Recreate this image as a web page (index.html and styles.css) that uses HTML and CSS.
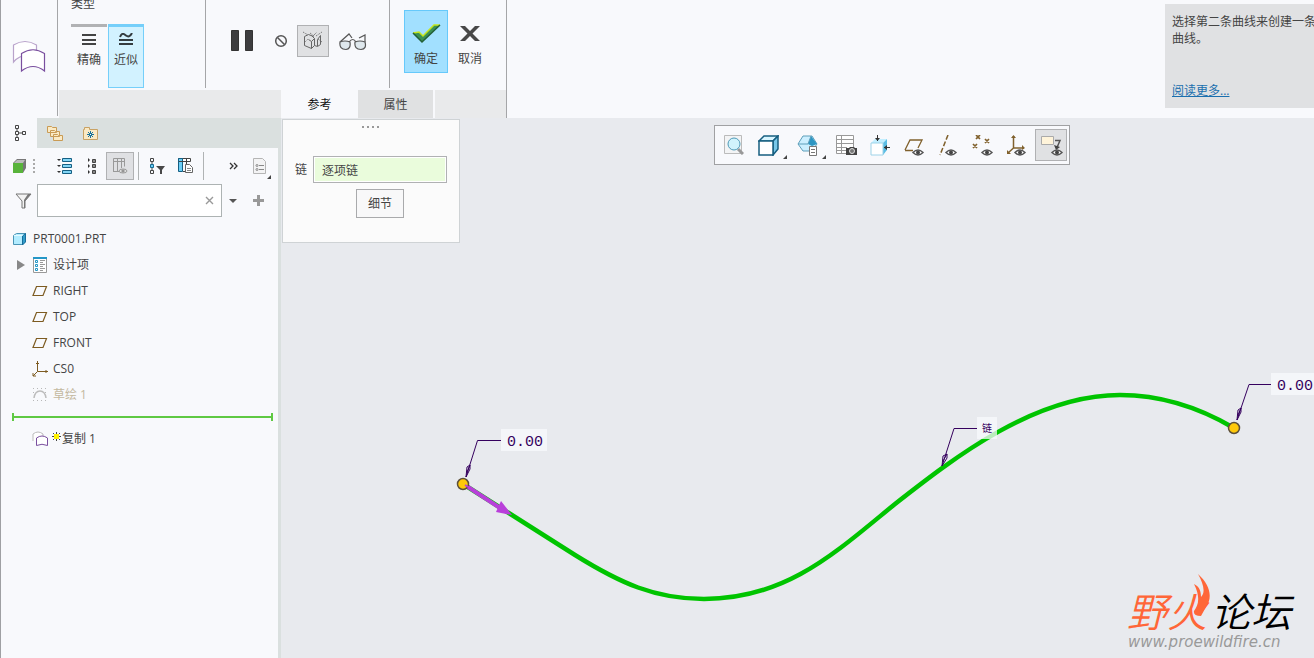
FILE: index.html
```html
<!DOCTYPE html>
<html lang="zh-CN">
<head>
<meta charset="utf-8">
<title>PRT0001</title>
<link rel="stylesheet" href="styles.css">
</head>
<body>
<header class="ribbon">
  <div class="feature">
    <svg width="34" height="34" viewBox="0 0 34 34" fill="#fff" stroke-width="1.200"><path d="M1.500 22V5Q13-2 24.500 5V17Q10 12 1.500 22Z" stroke="#b9a3cb"/><path d="M9.500 31V13.500Q21 6 32.500 13.500V31Q21 22 9.500 31Z" stroke="#7a4f9f"/></svg>
  </div>
  <div class="dashboard">
    <div class="groups">
      <section class="group group-type">
        <h2 class="group-title">类型</h2>
        <div class="choices">
          <button class="choice"><svg width="14" height="14" viewBox="0 0 14 14" stroke="#444" stroke-width="2"><path d="M0 2H14M0 7H14M0 11H14"/></svg><span>精确</span></button>
          <button class="choice choice-on"><svg width="14" height="14" viewBox="0 0 14 14" stroke="#333c40" stroke-width="2" fill="none"><path d="M1 4C3-1 5 1 7 2.500S11 4 13 0M0 7H14M0 11H14"/></svg><span>近似</span></button>
        </div>
      </section>
      <section class="group group-preview">
        <button class="icon-button" aria-label="暂停"><svg width="24" height="24" viewBox="0 0 24 24"><path d="M1.500 1.500h7v20h-7zM15.500 1.500h7v20h-7z" fill="#3d3d3f" stroke="#333"/></svg></button>
        <button class="icon-button" aria-label="无预览"><svg width="14" height="14" viewBox="0 0 14 14" fill="none" stroke="#555" stroke-width="1.500"><circle cx="7" cy="7" r="5.300"/><path d="M3.500 3.500l7 7"/></svg></button>
        <button class="icon-button icon-button-on" aria-label="分离"><svg width="22" height="20" viewBox="0 0 22 20" fill="none" stroke="#666"><path d="M2.500 5.500v9l7 3v-7l-3-2M9.500 10.500l3-3v7l-3 3M12.500 14.500l3 1 3-2V4.500M2.500 5.500l4-2 5 2M15.500 15V8.500l3-4M12.500 7.500l-3-3"/><path d="M1 1l5 3M14 5l6-4M8 2l4 3M12 4l3-3M16 8l4 3M2 12l4-4" stroke-dasharray="1 1"/></svg></button>
        <button class="icon-button" aria-label="特征预览"><svg width="28" height="20" viewBox="0 0 28 20" fill="none" stroke="#555" stroke-width="1.200"><path d="M1 11L10 3l3 4M20 7l6-3v7"/><path d="M1 11q5-2 10 0 1 7-4 7.500-7 0-6-7.500zM16 11q5-2 10 0 2 7-4 7.500-7 0-6-7.500z" fill="#dfe8ed"/><path d="M10 11q4-5 7 0"/></svg></button>
      </section>
      <section class="group group-finish">
        <button class="finish finish-ok"><svg width="30" height="22" viewBox="0 0 30 22"><path d="M2 11l6-1 4 4L23 3h6L11 20z" fill="#3a9154"/><path d="M2 11l6-1 4 4L23 3h6" fill="none" stroke="#c5e51c" stroke-width="1.500"/><path d="M29 3L11 20 2 11" fill="none" stroke="#225f38" stroke-width="1.500"/></svg><span>确定</span></button>
        <button class="finish"><svg width="20" height="22" viewBox="0 0 20 22" fill="#484848"><path d="M0 4h5l5 5 5-5h5l-7.500 7.500L20 19h-5l-5-5-5 5H0l7.500-7.500z"/></svg><span>取消</span></button>
      </section>
    </div>
    <nav class="tabs">
      <button class="tab tab-on">参考</button>
      <button class="tab">属性</button>
    </nav>
  </div>
  <aside class="help">
    <p class="help-text">选择第二条曲线来创建一条复合<br>曲线。</p>
    <a class="help-link" href="#more">阅读更多...</a>
  </aside>
</header>

<main class="workspace">
  <aside class="sidebar">
    <nav class="nav-tabs">
      <button class="nav-tab nav-tab-on" aria-label="模型树"><svg width="12" height="16" viewBox="0 0 12 16" fill="none" stroke="#444"><path d="M.5.500h3v3h-3zM.5 6.500h3v3h-3zM.5 12.500h3v3h-3zM7.500 6.500h3v3h-3zM2 4v2M2 10v2M4 8h3"/></svg></button>
      <button class="nav-tab" aria-label="文件夹浏览器"><svg width="17" height="17" viewBox="0 0 17 17" fill="#fbeac4" stroke="#c99b55"><path d="M.5 1.500h4l1 1h4v5h-9zM3.500 5.500h4l1 1h4v5h-9zM6.500 9.500h4l1 1h4v5h-9z"/></svg></button>
      <button class="nav-tab" aria-label="收藏夹"><svg width="16" height="15" viewBox="0 0 16 15"><path d="M.5 3.500h1v-2h5v2h8v10h-14z" fill="#fae9c4" stroke="#c9a264"/><path d="M7.500 5v7M4 8.500h7M5 6l5 5M10 6l-5 5" stroke="#17719b"/><path d="M7 8h1v1H7z" fill="#fff"/></svg></button>
    </nav>
    <div class="tree-tools">
      <button class="tool" aria-label="模型"><svg width="14" height="14" viewBox="0 0 14 14"><path d="M0 4l4-4h9v9l-3 5V4z" fill="#777"/><path d="M1 4l3-3h8l-2 3z" fill="#bbb"/><path d="M0 4h10v10H0z" fill="#58b33b"/></svg></button>
      <svg width="2" height="16" viewBox="0 0 2 16" fill="#aaa"><path d="M0 1h2v2H0zM0 5h2v2H0zM0 9h2v2H0zM0 13h2v2H0z"/></svg>
      <span></span>
      <button class="tool" aria-label="全部展开"><svg width="16" height="16" viewBox="0 0 16 16"><path d="M6.500.500h9v3h-9zM6.500 6.500h9v3h-9zM6.500 12.500h9v3h-9z" fill="#82d5f5" stroke="#155f83"/><path d="M1 1h4L3 3zM1 7h4L3 9zM1 13h4l-2 2z" fill="#333"/></svg></button>
      <button class="tool" aria-label="全部折叠"><svg width="9" height="16" viewBox="0 0 9 16"><path d="M4.500 1.500h3v3h-3zM4.500 6.500h3v3h-3zM4.500 12.500h3v3h-3z" fill="#888" stroke="#444"/><path d="M0 0l2 2-2 2zM0 6l2 2-2 2zM0 12l2 2-2 2z" fill="#333"/></svg></button>
      <button class="tool tool-on" aria-label="显示列"><svg width="16" height="16" viewBox="0 0 16 16" fill="none" stroke="#999"><path d="M1.500 13.500V.500h11v8M1 3.500h12M5.500 1v13M9.500 1v9M1 13.500h6"/><ellipse cx="11" cy="13" rx="4" ry="2" fill="#ddd"/><path d="M10 12h2v2h-2z" fill="#888"/></svg></button>
      <span class="rule"></span>
      <button class="tool" aria-label="树过滤器"><svg width="16" height="16" viewBox="0 0 16 16"><path d="M1.500.500h3v3h-3zM1.500 12.500h3v3h-3zM3 4v2M3 10v2" fill="none" stroke="#444"/><path d="M1.500 6.500h3v3h-3z" fill="#6bcef5" stroke="#176a92"/><path d="M7 8h9l-3 4v4h-2v-4z" fill="#484848"/></svg></button>
      <button class="tool" aria-label="树列"><svg width="16" height="16" viewBox="0 0 16 16"><path d="M.5.500h12v3H.5z" fill="#fff" stroke="#444"/><path d="M.5.500h4v13h-4z" fill="#6bcef5" stroke="#155f83"/><path d="M8.500 1v6M5 13.500h2M1 3.500h11" stroke="#444"/><path d="M7.500 6.500h4l3 3v5h-7z" fill="#fff" stroke="#666"/><path d="M9 10.500h4M9 12.500h4" stroke="#888"/></svg></button>
      <span class="rule"></span>
      <span></span>
      <button class="tool" aria-label="更多"><svg width="9" height="9" viewBox="0 0 9 9" fill="none" stroke="#333" stroke-width="1.300"><path d="M1 1l3 3-3 3M5 1l3 3-3 3"/></svg></button>
      <button class="tool menu" aria-label="设置"><svg width="14" height="17" viewBox="0 0 14 17"><path d="M.5.500h9l3 3v12H.5z" fill="#f3f3f4" stroke="#b5b5b5"/><path d="M6 7.500h5M6 11.500h5" stroke="#888"/><circle cx="4" cy="7.500" r="1" fill="none" stroke="#888"/><circle cx="4" cy="11.500" r="1" fill="none" stroke="#888"/></svg></button>
    </div>
    <div class="search">
      <svg width="17" height="16" viewBox="0 0 17 16"><path d="M1 1h15l-6 7v7H7V8z" fill="#f3f3f3" stroke="#777"/><path d="M16 1l-6 7v7H9V7l4-6z" fill="#777"/></svg>
      <div class="search-box"><input class="search-input" type="text" aria-label="搜索"><button class="tool search-clear" aria-label="清除"><svg width="9" height="9" viewBox="0 0 9 9" stroke="#999" stroke-width="1.400"><path d="M1 1l7 7M8 1L1 8"/></svg></button></div>
      <button class="tool" aria-label="搜索选项"><svg width="8" height="4" viewBox="0 0 8 4"><path d="M0 0h8L4 4z" fill="#555"/></svg></button>
      <button class="tool" aria-label="添加"><svg width="11" height="11" viewBox="0 0 11 11" stroke="#999" stroke-width="3"><path d="M5.500 0v11M0 5.500h11"/></svg></button>
    </div>
    <ul class="tree">
      <li class="node node-root"><svg width="14" height="14" viewBox="0 0 14 14" stroke="#4a94b5"><path d="M.5 3.500l3-2h9v8l-3 3H.5z" fill="#b2ecff"/><path d="M9.500 4v9l3-3V1.500z" fill="#319cc9" stroke="#176d9b"/><path d="M1 3.500h8.500" stroke="#e4faff"/></svg><span>PRT0001.PRT</span></li>
      <li class="node node-open"><svg width="8" height="10" viewBox="0 0 8 10"><path d="M0 0l8 5-8 5z" fill="#888"/></svg><svg width="16" height="16" viewBox="0 0 16 16"><path d="M1.500.500h13v15h-13z" fill="#fff" stroke="#999"/><path d="M1 1h14" stroke="#2497c7" stroke-width="2"/><path d="M3.500 3.500h2v2h-2zM3.500 7.500h2v2h-2zM3.500 11.500h2v2h-2z" fill="#fff" stroke="#2497c7"/><path d="M8 3.500h5M8 5.500h3M8 7.500h5M8 9.500h3M8 11.500h5M8 13.500h3" stroke="#999"/></svg><span>设计项</span></li>
      <li class="node"><svg width="16" height="16" viewBox="0 0 16 16"><path d="M1 12.500L4.500 3.500H14.500L11 12.500Z" fill="none" stroke="#7d5b21" stroke-width="1.200"/></svg><span>RIGHT</span></li>
      <li class="node"><svg width="16" height="16" viewBox="0 0 16 16"><path d="M1 12.500L4.500 3.500H14.500L11 12.500Z" fill="none" stroke="#7d5b21" stroke-width="1.200"/></svg><span>TOP</span></li>
      <li class="node"><svg width="16" height="16" viewBox="0 0 16 16"><path d="M1 12.500L4.500 3.500H14.500L11 12.500Z" fill="none" stroke="#7d5b21" stroke-width="1.200"/></svg><span>FRONT</span></li>
      <li class="node"><svg width="16" height="16" viewBox="0 0 16 16"><path d="M5.500 0v10.500H16M5.500 10.500L1 15M4 2.500h3M14 9v3M1 12v3h3" fill="none" stroke="#7d5b21"/></svg><span>CS0</span></li>
      <li class="node node-dim"><svg width="16" height="16" viewBox="0 0 16 16" fill="none"><path d="M1 1.500h14M1 13.500h14M1 5.500h2M13 5.500h2" stroke="#b8b8b8" stroke-dasharray="1 3"/><path d="M2 11Q3 4 8 4t6 7" stroke="#bcbcbc" stroke-width="1.500"/></svg><span>草绘 1</span></li>
    </ul>
    <div class="insert-mark"></div>
    <ul class="tree">
      <li class="node node-new"><svg width="17" height="16" viewBox="0 0 17 16"><path d="M1 10V3Q6-1 11 3v5" fill="#fff" stroke="#bbb"/><path d="M4.500 14.500V7Q10 3 15.500 7v7.500Q10 12 4.500 14.500Z" fill="#fff" stroke="#7a4f9f"/></svg><svg width="9" height="16" viewBox="0 0 9 16"><path d="M4.500 1v9M0 5.500h9M1 2l7 7M8 2L1 9" stroke="#444"/><path d="M2 3h5v5H2z" fill="#fff200"/></svg><span>复制 1</span></li>
    </ul>
  </aside>

  <section class="canvas">
    <svg class="drawing" width="1033" height="540" viewBox="281 118 1033 540">
      <path d="M463 484L575 555C620 583 655 599 704 599C787 599 836 552 895 504C955 457 1035 395 1120 395C1160 395 1200 408 1234 428" fill="none" stroke="#00c400" stroke-width="4.500"/>
      <path d="M465 485L500 508" stroke="#b93fda" stroke-width="4"/>
      <path d="M501 501L512 515L496 512Z" fill="#b93fda"/>
      <g fill="#ffc90a" stroke="#5d5039" stroke-width="1.500"><circle cx="463" cy="484" r="5.500"/><circle cx="1234" cy="428" r="5.500"/></g>
      <path d="M465 485l8 5" stroke="#b93fda" stroke-width="2"/>
      <g fill="none" stroke="#35005e"><path d="M466 477L477.500 440.500H501M1237 420L1249 384.500H1271M942 466L954 428.500H977"/><path d="M466 477l1-10 3-2 0 4zM1237 420l1-10 3-2 0 4zM942 466l1-10 4-2 0 4zM467 472l3-7M1238 415l3-7M943 461l4-7"/></g>
      <g class="note-box"><path d="M501 429h46v22h-46zM1271 373h46v22h-46zM977 417h20v22h-20z"/></g>
      <text class="note" x="507" y="446">0.00</text>
      <text class="note" x="1277" y="390">0.00</text>
      <text class="note note-small" x="982" y="432">链</text>
    </svg>

    <form class="panel">
      <svg class="panel-grip" width="18" height="2" viewBox="0 0 18 2" fill="#999"><path d="M0 0h2v2H0zM5 0h2v2H5zM10 0h2v2h-2zM15 0h2v2h-2z"/></svg>
      <div class="panel-row"><label for="chain">链</label><input id="chain" class="chain" type="text" value="逐项链"></div>
      <button class="details" type="button">细节</button>
    </form>

    <div class="view-area">
      <div class="view-tools">
        <button class="view" aria-label="重新调整"><svg width="20" height="20" viewBox="0 0 20 20"><path d="M.5.500h17v18H.5z" fill="#f3f4f5" stroke="#bbb"/><path d="M14 14l5 5" stroke="#999" stroke-width="3"/><circle cx="10" cy="9" r="6" fill="#d1f3fc" stroke="#4f9ab8"/></svg></button>
        <button class="view menu view-menu" aria-label="显示样式"><svg width="21" height="21" viewBox="0 0 21 21" stroke="#175f80" stroke-width="1.500"><path d="M1 6l5-5h14l-5 5z" fill="#d7f5ff"/><path d="M15 6l5-5v13l-5 6z" fill="#78c8e9"/><path d="M1 6h14v14H1z" fill="#fff"/></svg></button>
        <button class="view menu view-menu" aria-label="已保存方向"><svg width="21" height="21" viewBox="0 0 21 21"><path d="M1 9l5-8h9l5 8-5 7H6z" fill="#ccefff" stroke="#5e9fba"/><path d="M14 1l6 8-5 2-4-2z" fill="#2d96c3"/><path d="M1 9h10M11 9l3-8" stroke="#5e9fba"/><path d="M12.500 11.500h7v9h-7z" fill="#fff" stroke="#777"/><path d="M14 14.500h4M14 17.500h4" stroke="#777"/></svg></button>
        <button class="view" aria-label="视图管理器"><svg width="21" height="21" viewBox="0 0 21 21"><path d="M.5.500h17v18H.5zM1 4.500h16M1 8.500h16M1 12.500h10M1 15.500h9M5.500 1v17" fill="#fff" stroke="#999"/><path d="M10 13h3l1-1h4l1 1h2v7H10z" fill="#444"/><circle cx="16" cy="16" r="2.500" fill="#777" stroke="#ddd"/></svg></button>
        <button class="view" aria-label="截面"><svg width="20" height="21" viewBox="0 0 20 21"><path d="M1 8l4-4h12l-4 4z" fill="#c3efff"/><path d="M13 8l4-4v11l-4 5z" fill="#5bbde4"/><path d="M1 8h12v12H1z" fill="#fff" stroke="#9ed3e8"/><path d="M7.500 0v6M14 12.500h6" stroke="#333"/><path d="M5 3h5L7.500 6zM17 10v5l-3-2.500z" fill="#333"/></svg></button>
        <button class="view" aria-label="平面显示"><svg width="20" height="21" viewBox="0 0 20 21"><path d="M1 15L6 5h12l-4 8M1 15.500h8" fill="none" stroke="#80612d" stroke-width="1.300"/><path d="M9 17.500q5-5 10 0-5 5-10 0z" fill="#fff" stroke="#555" stroke-width="1.500"/><circle cx="14" cy="17.500" r="2" fill="#444"/></svg></button>
        <button class="view" aria-label="轴显示"><svg width="20" height="21" viewBox="0 0 20 21"><path d="M10 0L2 20" fill="none" stroke="#80612d" stroke-width="1.500" stroke-dasharray="5 2"/><path d="M8 17.500q5-5 10 0-5 5-10 0z" fill="#fff" stroke="#555" stroke-width="1.500"/><circle cx="13" cy="17.500" r="2" fill="#444"/></svg></button>
        <button class="view" aria-label="点显示"><svg width="21" height="21" viewBox="0 0 21 21"><path d="M4 0l4 4M8 0L4 4M13 4l4 4M17 4l-4 4M1 9l4 4M5 9l-4 4" fill="none" stroke="#80612d" stroke-width="1.700"/><path d="M10 17.500q5-5 10 0-5 5-10 0z" fill="#fff" stroke="#555" stroke-width="1.500"/><circle cx="15" cy="17.500" r="2" fill="#444"/></svg></button>
        <button class="view" aria-label="坐标系显示"><svg width="20" height="21" viewBox="0 0 20 21"><path d="M7.500 1v12H18M7.500 13L2 18" fill="none" stroke="#80612d" stroke-width="1.500"/><path d="M5 3l2.500-3L10 3zM16 10v5l3-2zM1 15v4h4z" fill="#80612d"/><path d="M9 17.500q5-5 10 0-5 5-10 0z" fill="#fff" stroke="#555" stroke-width="1.500"/><circle cx="14" cy="17.500" r="2" fill="#444"/></svg></button>
        <button class="view view-on" aria-label="注释显示"><svg width="23" height="21" viewBox="0 0 23 21"><path d="M1.500 1.500h12v8h-12z" fill="#fff4da" stroke="#aaa"/><path d="M15 5.500h5l-3 7" fill="none" stroke="#555" stroke-width="1.500"/><path d="M14 10l6 2-4 3z" fill="#444"/><path d="M12 17.500q5-5 10 0-5 5-10 0z" fill="#fff" stroke="#555" stroke-width="1.500"/><circle cx="17" cy="17.500" r="2" fill="#444"/></svg></button>
      </div>
    </div>

    <div class="brand">
      <svg class="brand-flame" width="18" height="44" viewBox="0 0 18 44"><path d="M5 0C17 11 20 23 13 33L8 42Q0 42 1 37C5 32 8 24 1 10C7 13 8 18 8 23C13 18 10 9 5 0Z" fill="#ff6638"/></svg>
      <div class="brand-name"><span class="brand-fire">野火</span><span>论坛</span></div>
      <div class="brand-url">www.proewildfire.cn</div>
    </div>
  </section>
</main>
</body>
</html>
```

FILE: styles.css
```css
* { box-sizing: border-box; }

body {
  margin: 0;
  min-height: 100vh;
  display: flex;
  flex-direction: column;
  overflow: hidden;
  border-left: 1px solid #9fa0a3;
  background: #f8f9fc;
  color: #444;
  font: 12px/16px "Open Sans", "Noto Sans CJK SC", sans-serif;
}

button, input { font: inherit; color: inherit; }
button { padding: 0; border: 0; background: none; }
svg { display: block; flex: none; }

/* Ribbon */
.ribbon { display: flex; align-items: flex-start; }
.feature {
  width: 57px;
  height: 116px;
  padding: 40px 0 0 11px;
  border-right: 1px solid #a5a6a8;
}
.dashboard {
  margin-left: 1px;
  border-right: 1px solid #a5a6a8;
}
.groups { display: flex; height: 90px; }
.group { height: 88px; border-right: 1px solid #a5a6a8; }
.group:last-child { border-right: 0; }

.group-type { width: 147px; padding-left: 12px; }
.group-title { margin: -4px 0 12px; font: inherit; }
.choices { display: flex; gap: 1px; }
.choice {
  width: 36px;
  height: 64px;
  display: flex;
  flex-direction: column;
  align-items: center;
  gap: 5px;
  padding-top: 6px;
  border-top: 3px solid #b1b2b4;
}
.choice-on {
  border: 1px solid #75cffa;
  border-top-width: 3px;
  background: #d2f2ff;
}

.group-preview {
  width: 184px;
  display: flex;
  align-items: center;
  justify-content: space-between;
  padding: 0 22px 6px 24px;
}
.icon-button { display: grid; place-items: center; }
.icon-button:first-child { margin-right: 10px; }
.icon-button-on {
  width: 32px;
  height: 32px;
  border: 1px solid #b0b1b3;
  background: #e0e1e3;
}

.group-finish { width: 116px; display: flex; padding: 10px 0 0 14px; }
.finish {
  width: 44px;
  height: 63px;
  display: flex;
  flex-direction: column;
  align-items: center;
  gap: 7px;
  padding-top: 12px;
}
.finish-ok { padding-top: 11px; border: 1px solid #66c9fb; background: #a2e0ff; }

.tabs { display: flex; height: 28px; padding-left: 222px; background: #e9eaeb; }
.tab {
  width: 77px;
  padding-top: 2px;
  border-right: 2px solid #f8f9fc;
  background: #e0e1e2;
}
.tab-on { border-right: 0; background: #f8f9fc; color: #111; }

.help {
  width: 149px;
  height: 104px;
  margin: 4px 0 0 auto;
  padding: 9px 0 0 7px;
  overflow: hidden;
  background: #e0e1e3;
  white-space: nowrap;
}
.help-text { margin: 0 0 36px; line-height: 17px; }
.help-link { color: #1b6fae; }

/* Model tree */
.workspace { flex: 1; display: flex; }
.sidebar { width: 280px; border-right: 3px solid #dae0df; }
.nav-tabs { display: flex; height: 30px; background: #dae0df; }
.nav-tab { width: 36px; display: grid; place-items: center; }
.nav-tab-on { padding-left: 3px; background: #f8f9fc; }

.tree-tools {
  display: grid;
  grid-template-columns: 20px 8px 12px 28px 28px 28px 8px 30px 28px 6px 14px 26px 28px;
  align-items: center;
  justify-items: center;
  height: 36px;
  padding-left: 9px;
}
.tool { display: grid; place-items: center; }
.tool-on {
  width: 28px;
  height: 28px;
  border: 1px solid #b0b1b3;
  background: #dfe0e3;
}
.rule { width: 1px; height: 28px; background: #b0b3b4; }
.menu { position: relative; }
.menu::after {
  content: "";
  position: absolute;
  right: -4px;
  bottom: -4px;
  border: 2px solid #444;
  border-top-color: transparent;
  border-left-color: transparent;
}

.search { display: flex; align-items: center; padding-left: 14px; }
.search-box {
  width: 185px;
  height: 33px;
  display: flex;
  align-items: center;
  margin: 0 7px 0 5px;
  border: 1px solid #adb3b3;
  background: #fff;
}
.search-input { flex: 1; min-width: 0; border: 0; background: none; }
.search-clear { margin-right: 7px; }
.search > .tool:last-child { margin-left: 16px; }

.tree { margin: 0; padding: 0; list-style: none; }
.search + .tree { margin-top: 9px; }
.node { display: flex; align-items: center; gap: 5px; height: 26px; padding-left: 31px; }
.node-root { gap: 6px; padding-left: 12px; }
.node-open { padding-left: 16px; }
.node-open svg:first-child { margin-right: 2px; }
.node-dim { color: #c3b89f; }
.node-new { gap: 3px; }
.node-new svg + svg { margin-right: -2px; }
.insert-mark {
  height: 8px;
  margin: 5px 5px 5px 11px;
  border: solid #5fc943;
  border-width: 0 2px;
  background: linear-gradient(#5fc943, #5fc943) center / 100% 2px no-repeat;
}

/* Graphics area */
.canvas {
  position: relative;
  flex: 1;
  min-width: 0;
  display: flex;
  align-items: flex-start;
  overflow: hidden;
  background: #e8eaee;
}
.drawing { position: absolute; left: 0; top: 0; }
.note-box { fill: #f8f9fc; fill-opacity: .75; }
.note { fill: #35005e; font: 15px "Liberation Mono", monospace; }
.note-small { font: 10px "Noto Sans CJK SC", sans-serif; }

.panel {
  position: relative;
  width: 178px;
  margin: 1px 0 0 1px;
  padding: 6px 12px 24px;
  border: 1px solid #cfd3d5;
  background: #fbfbfb;
}
.panel-grip { margin: 0 auto 28px; }
.panel-row { display: flex; align-items: center; gap: 6px; }
.chain {
  flex: 1;
  min-width: 0;
  height: 27px;
  padding: 0 8px;
  border: 1px solid #b0b1b3;
  background: #eafcdc;
  box-shadow: inset 0 0 0 1px #fff;
}
.details {
  display: block;
  width: 48px;
  height: 29px;
  margin: 6px 0 0 61px;
  border: 1px solid #a9aaac;
  background: #f8f8f9;
}

.view-area { flex: 1; display: flex; justify-content: center; padding: 7px 0 0 10px; }
.view-tools {
  position: relative;
  display: flex;
  align-items: center;
  height: 40px;
  padding: 0 2px;
  border: 1px solid #a0a1a3;
  background: #f8f9fc;
}
.view { width: 34px; height: 32px; display: grid; place-items: center; }
.view-menu { margin-right: 5px; }
.view-menu::after { right: -2px; bottom: 2px; }
.view-on { width: 32px; margin-left: 2px; border: 1px solid #b0b1b3; background: #e0e1e3; }

.brand { position: absolute; right: 23px; bottom: 8px; }
.brand-name {
  display: flex;
  gap: 4px;
  color: #000;
  font: italic 350 40px/48px "Noto Sans CJK SC", sans-serif;
}
.brand-fire { color: #ff6638; }
.brand-url { padding-left: 1px; color: #999; font: italic 15px/16px "DejaVu Sans", sans-serif; }
.brand-flame { position: absolute; left: 66px; top: -12px; }
```
